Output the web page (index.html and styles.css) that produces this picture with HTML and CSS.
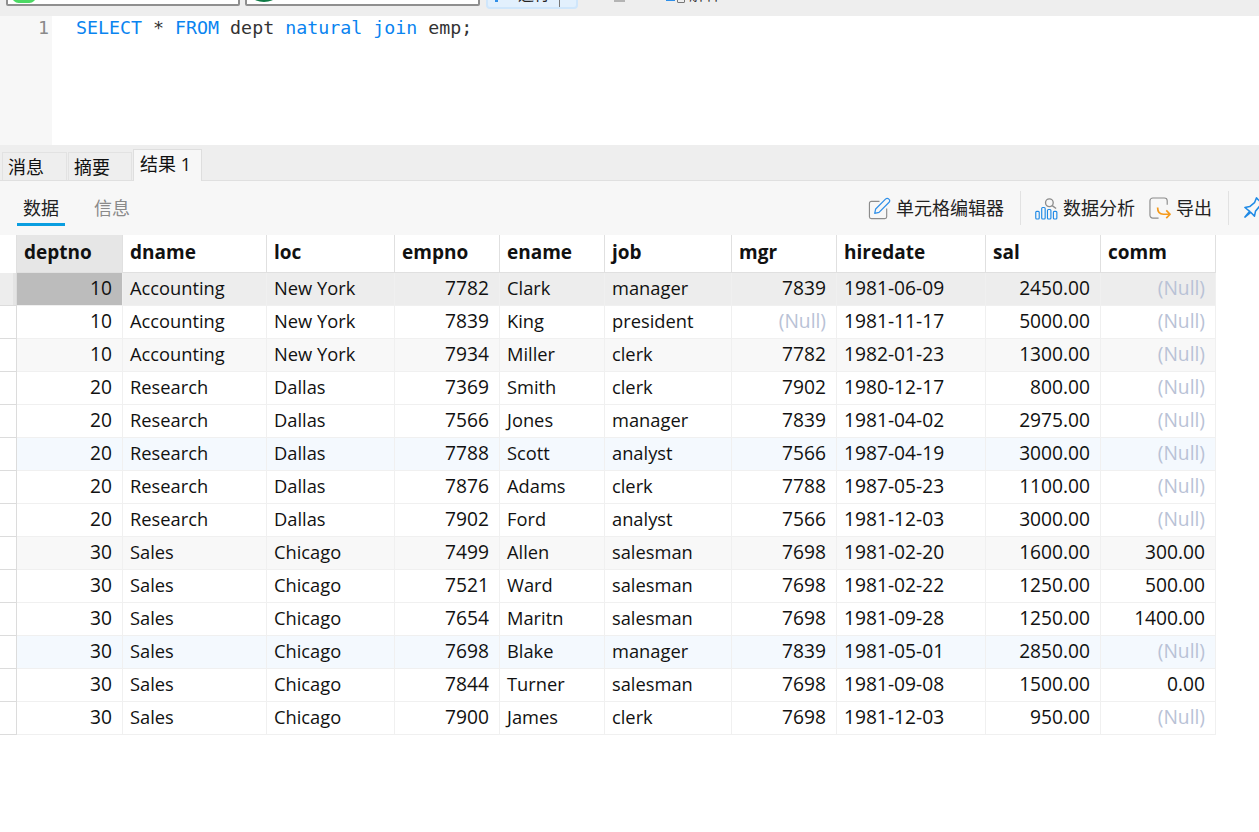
FILE: index.html
```html
<!DOCTYPE html>
<html lang="zh">
<head>
<meta charset="utf-8">
<title>查询</title>
<link rel="stylesheet" href="styles.css">
</head>
<body>
<header class="toolbar">
  <div class="combo combo-a"><span class="pill green"></span><span class="combo-text">M</span></div>
  <div class="combo combo-b"><span class="pill dark"></span></div>
  <div class="run"><span class="run-main"><span class="run-glyph"></span>运行</span><span class="run-arrow"></span></div>
  <div class="tool stop"><span class="stop-mark"></span></div>
  <div class="tool explain"><span class="explain-line"></span><span class="explain-box"></span>解释</div>
</header>
<section class="editor">
  <div class="gutter">1</div>
  <pre class="code"><span class="kw">SELECT</span> * <span class="kw">FROM</span> dept <span class="kw">natural</span> <span class="kw">join</span> emp;</pre>
</section>
<nav class="tabs">
  <div class="tab">消息</div>
  <div class="tab">摘要</div>
  <div class="tab active">结果 1</div>
</nav>
<section class="subbar">
  <div class="subtab current">数据</div>
  <div class="subtab">信息</div>
  <div class="actions">
    <div class="action">
      <svg class="icon" viewBox="0 0 24 24" fill="none"><path d="M12 4.5H3.5a2 2 0 0 0-2 2v14a2 2 0 0 0 2 2h14a2 2 0 0 0 2-2V12" stroke="#8c8c8c" stroke-width="1.2"/><path d="M8 12.5 18.5 2a2 2 0 0 1 3 0l.5.5a2 2 0 0 1 0 3L11.5 16 7 17z" stroke="#2f8fe8" stroke-width="1.3" stroke-linejoin="round"/></svg>
      <span>单元格编辑器</span>
    </div>
    <div class="sep"></div>
    <div class="action">
      <svg class="icon" viewBox="0 0 24 24" fill="none"><g stroke="#1f8ae6" stroke-width="1.2"><rect x=".8" y="15" width="3.6" height="8" rx="1"/><rect x="7" y="11" width="3.6" height="12" rx="1"/><rect x="13" y="13" width="3.6" height="10" rx="1"/><rect x="19.2" y="15" width="3.6" height="8" rx="1"/></g><circle cx="15" cy="6" r="4" stroke="#8c8c8c" stroke-width="1.4"/><path d="m18 9 4 3" stroke="#8c8c8c" stroke-width="1.4"/></svg>
      <span>数据分析</span>
    </div>
    <div class="action export">
      <svg class="icon" viewBox="0 0 24 24" fill="none"><path d="M10 22H4a3 3 0 0 1-3-3V4a3 3 0 0 1 3-3h12a3 3 0 0 1 3 3v4" stroke="#8c8c8c" stroke-width="1.2"/><path d="M9 11c0 4 2 7 6 7h7m-4-4 4 4-4 4" stroke="#f59a1b" stroke-width="1.8" stroke-linejoin="round"/></svg>
      <span>导出</span>
    </div>
    <div class="sep"></div>
    <svg class="icon pin" viewBox="0 0 24 24" fill="none"><path d="M14 2 22 10l-5 1-4 5-1 5-4-4-6 5 5-6-5-4 5-1 5-4z" stroke="#1f8ae6" stroke-width="1.6" stroke-linejoin="round"/></svg>
  </div>
</section>
<table class="grid">
  <colgroup>
    <col class="c-h"><col class="c-1"><col class="c-2"><col class="c-3"><col class="c-4"><col class="c-5"><col class="c-6"><col class="c-7"><col class="c-8"><col class="c-9"><col class="c-10">
  </colgroup>
  <thead>
    <tr>
      <th class="corner"></th><th class="sorted">deptno</th><th>dname</th><th>loc</th><th>empno</th><th>ename</th><th>job</th><th>mgr</th><th>hiredate</th><th>sal</th><th>comm</th>
    </tr>
  </thead>
  <tbody>
    <tr class="selected"><td class="rh"></td><td class="n first">10</td><td>Accounting</td><td>New York</td><td class="n">7782</td><td>Clark</td><td>manager</td><td class="n">7839</td><td>1981-06-09</td><td class="n">2450.00</td><td class="n null">(Null)</td></tr>
    <tr><td class="rh"></td><td class="n">10</td><td>Accounting</td><td>New York</td><td class="n">7839</td><td>King</td><td>president</td><td class="n null">(Null)</td><td>1981-11-17</td><td class="n">5000.00</td><td class="n null">(Null)</td></tr>
    <tr class="gray"><td class="rh"></td><td class="n">10</td><td>Accounting</td><td>New York</td><td class="n">7934</td><td>Miller</td><td>clerk</td><td class="n">7782</td><td>1982-01-23</td><td class="n">1300.00</td><td class="n null">(Null)</td></tr>
    <tr><td class="rh"></td><td class="n">20</td><td>Research</td><td>Dallas</td><td class="n">7369</td><td>Smith</td><td>clerk</td><td class="n">7902</td><td>1980-12-17</td><td class="n">800.00</td><td class="n null">(Null)</td></tr>
    <tr><td class="rh"></td><td class="n">20</td><td>Research</td><td>Dallas</td><td class="n">7566</td><td>Jones</td><td>manager</td><td class="n">7839</td><td>1981-04-02</td><td class="n">2975.00</td><td class="n null">(Null)</td></tr>
    <tr class="blue"><td class="rh"></td><td class="n">20</td><td>Research</td><td>Dallas</td><td class="n">7788</td><td>Scott</td><td>analyst</td><td class="n">7566</td><td>1987-04-19</td><td class="n">3000.00</td><td class="n null">(Null)</td></tr>
    <tr><td class="rh"></td><td class="n">20</td><td>Research</td><td>Dallas</td><td class="n">7876</td><td>Adams</td><td>clerk</td><td class="n">7788</td><td>1987-05-23</td><td class="n">1100.00</td><td class="n null">(Null)</td></tr>
    <tr><td class="rh"></td><td class="n">20</td><td>Research</td><td>Dallas</td><td class="n">7902</td><td>Ford</td><td>analyst</td><td class="n">7566</td><td>1981-12-03</td><td class="n">3000.00</td><td class="n null">(Null)</td></tr>
    <tr class="gray"><td class="rh"></td><td class="n">30</td><td>Sales</td><td>Chicago</td><td class="n">7499</td><td>Allen</td><td>salesman</td><td class="n">7698</td><td>1981-02-20</td><td class="n">1600.00</td><td class="n">300.00</td></tr>
    <tr><td class="rh"></td><td class="n">30</td><td>Sales</td><td>Chicago</td><td class="n">7521</td><td>Ward</td><td>salesman</td><td class="n">7698</td><td>1981-02-22</td><td class="n">1250.00</td><td class="n">500.00</td></tr>
    <tr><td class="rh"></td><td class="n">30</td><td>Sales</td><td>Chicago</td><td class="n">7654</td><td>Maritn</td><td>salesman</td><td class="n">7698</td><td>1981-09-28</td><td class="n">1250.00</td><td class="n">1400.00</td></tr>
    <tr class="blue"><td class="rh"></td><td class="n">30</td><td>Sales</td><td>Chicago</td><td class="n">7698</td><td>Blake</td><td>manager</td><td class="n">7839</td><td>1981-05-01</td><td class="n">2850.00</td><td class="n null">(Null)</td></tr>
    <tr><td class="rh"></td><td class="n">30</td><td>Sales</td><td>Chicago</td><td class="n">7844</td><td>Turner</td><td>salesman</td><td class="n">7698</td><td>1981-09-08</td><td class="n">1500.00</td><td class="n">0.00</td></tr>
    <tr><td class="rh"></td><td class="n">30</td><td>Sales</td><td>Chicago</td><td class="n">7900</td><td>James</td><td>clerk</td><td class="n">7698</td><td>1981-12-03</td><td class="n">950.00</td><td class="n null">(Null)</td></tr>
  </tbody>
</table>
</body>
</html>
```
FILE: styles.css
```css
* { box-sizing: border-box; }
html, body { margin: 0; padding: 0; }
body {
  width: 1259px;
  height: 832px;
  overflow: hidden;
  background: #fff;
  color: #111;
  font-family: "Open Sans", "Noto Sans CJK SC", sans-serif;
  font-size: 18px;
}

/* top toolbar, cut off by the window edge */
.toolbar {
  height: 16px;
  background: #eeeeee;
  overflow: hidden;
  display: flex;
  align-items: flex-start;
  padding-left: 6px;
  font-size: 16px;
  line-height: 16px;
}
.toolbar > * { flex: none; }
.combo {
  height: 30px;
  margin-top: -24px;
  background: #fff;
  border: 2px solid #8f8f8f;
  border-radius: 2px;
  display: flex;
  align-items: flex-end;
  padding-left: 4px;
  overflow: hidden;
}
.combo-a { width: 234px; margin-right: 5px; }
.combo-b { width: 235px; margin-right: 6px; }
.pill { display: block; height: 10px; }
.pill.green { width: 24px; background: #4cd964; border-radius: 4px 4px 8px 8px; margin-bottom: 1px; }
.pill.dark { width: 22px; background: #0e7a45; border-radius: 50%; margin-bottom: 2px; margin-left: 2px; }
.combo-text { margin-left: 12px; line-height: 12px; font-size: 14px; color: #222; margin-bottom: 3px; }
.run {
  width: 92px;
  height: 33px;
  margin-top: -24px;
  background: #e2f0fd;
  border: 2px solid #cfe6fb;
  border-radius: 4px;
  display: flex;
  margin-right: 35px;
}
.run-main {
  flex: 1;
  height: 29px;
  padding: 8px 0 0 7px;
  border-right: 1px solid #777;
  display: flex;
  gap: 20px;
  color: #222;
  overflow: hidden;
}
.run-glyph { width: 3px; height: 16px; background: #2f8fe8; }
.run-arrow { width: 16px; }
.tool { height: 16px; margin-top: -14px; color: #999; }
.stop { width: 53px; margin-top: 0; }
.stop-mark { display: block; width: 11px; height: 2px; margin-left: 1px; background: #b4b4b4; }
.explain { display: flex; color: #333; }
.explain-line { width: 9px; height: 15px; border-bottom: 2px solid #2f8fe8; }
.explain-box { width: 8px; height: 17px; margin: 0 4px 0 2px; border: 1px solid #777; border-radius: 1px; }

/* editor */
.editor { height: 129px; display: flex; background: #fff; }
.gutter {
  width: 52px;
  background: #f7f7f7;
  color: #8a8a8a;
  text-align: right;
  padding: 1px 3px 0 0;
  font: 18.3px/22px "DejaVu Sans Mono", monospace;
}
.code {
  margin: 0;
  padding: 1px 0 0 24px;
  font: 18.3px/22px "DejaVu Sans Mono", monospace;
  color: #333;
}
.kw { color: #0a84f0; }

/* result tabs */
.tabs {
  height: 36px;
  background: #eeeeee;
  border-bottom: 1px solid #e0e0e0;
  display: flex;
  align-items: flex-end;
  padding-left: 2px;
  gap: 1px;
}
.tab {
  width: 64px;
  height: 28px;
  padding-left: 5px;
  line-height: 28px;
  border: 1px solid #e2e2e2;
  border-bottom: 0;
  color: #111;
}
.tab:first-child { width: 65px; }
.tab.active {
  width: 69px;
  height: 32px;
  margin-bottom: -1px;
  padding-left: 6px;
  background: #f7f7f7;
  line-height: 29px;
  border-color: #dedede;
}

/* sub bar */
.subbar {
  height: 54px;
  background: #f7f7f7;
  display: flex;
  padding-left: 17px;
}
.subtab {
  width: 48px;
  margin-right: 23px;
  height: 45px;
  text-align: center;
  line-height: 54px;
  color: #8a8a8a;
}
.subtab.current { color: #222; border-bottom: 3px solid #0a9ee0; }
.actions {
  margin-left: auto;
  display: flex;
  align-items: center;
  height: 54px;
  overflow: hidden;
  width: 392px;
  flex: none;
  padding-left: 1px;
}
.action { display: flex; align-items: center; gap: 5px; color: #222; flex: none; }
.action span { position: relative; top: -1px; }
.action.export { margin-left: 14px; }
.action.export svg { margin-right: -1px; }
.icon { width: 23px; height: 23px; flex: none; display: block; }
.sep { width: 1px; height: 34px; background: #e2e2e2; margin: 0 14px 0 16px; flex: none; }
.pin { margin-top: -2px; }

/* grid */
.grid {
  border-collapse: separate;
  border-spacing: 0;
  table-layout: fixed;
  width: 1216px;
  font-size: 18.3px;
}
.c-h { width: 17px; }
.c-1 { width: 106px; }
.c-2 { width: 144px; }
.c-3 { width: 128px; }
.c-4, .c-5 { width: 105px; }
.c-6 { width: 127px; }
.c-7 { width: 105px; }
.c-8 { width: 149px; }
.c-9, .c-10 { width: 115px; }
th {
  height: 38px;
  padding: 0 7px 3px;
  text-align: left;
  font-weight: 700;
  font-size: 19px;
  color: #111;
  background: #fff;
  border-right: 1px solid #e0e0e0;
  border-bottom: 1px solid #e0e0e0;
  white-space: nowrap;
}
th.corner { border-bottom: 0; }
th.sorted { background: #e6e6e6; }
td {
  height: 33px;
  padding: 0 7px 4px;
  border-right: 1px solid #f0f0f0;
  border-bottom: 1px solid #f0f0f0;
  white-space: nowrap;
  overflow: hidden;
  background: #fff;
}
td.n, td:nth-child(9) { font-size: 19.2px; padding-bottom: 3px; }
td.n { text-align: right; padding-right: 10px; }
td.rh { padding: 0; border-right: 1px solid #dcdcdc; border-bottom-color: #dcdcdc; }
td.null { color: #b9c2d6; }
tr.selected td { background: #ededed; }
tr.selected td.rh { background: linear-gradient(to right, #ededed 13px, #e4e4e4 13px); }
tr.selected td.first { background: #bcbcbc; }
tr.gray td { background: #f8f8f8; }
tr.blue td { background: #f4f9fe; }
tr.gray td.rh, tr.blue td.rh { background: #fff; }
```
